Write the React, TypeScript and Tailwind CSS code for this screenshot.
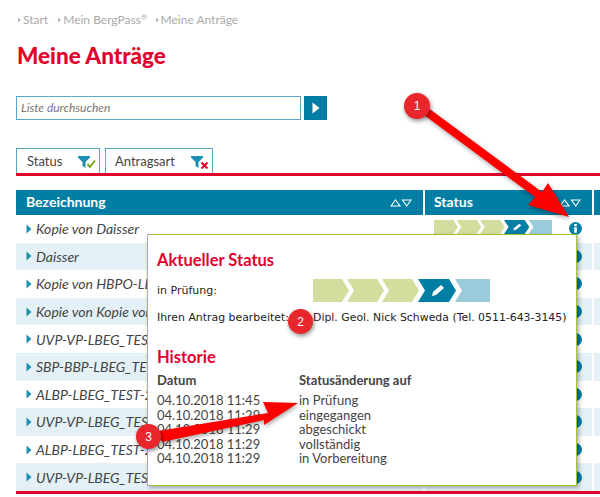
import React from "react";

const rows = [
  "Kopie von Daisser",
  "Daisser",
  "Kopie von HBPO-LBEG_TEST",
  "Kopie von Kopie von Daisser",
  "UVP-VP-LBEG_TEST-2018",
  "SBP-BBP-LBEG_TEST-2018",
  "ALBP-LBEG_TEST-2018",
  "UVP-VP-LBEG_TEST-2018",
  "ALBP-LBEG_TEST-2018",
  "UVP-VP-LBEG_TEST-2018",
];

const history = [
  ["04.10.2018 11:45", "in Prüfung"],
  ["04.10.2018 11:29", "eingegangen"],
  ["04.10.2018 11:29", "abgeschickt"],
  ["04.10.2018 11:29", "vollständig"],
  ["04.10.2018 11:29", "in Vorbereitung"],
];

const Caret = () => (
  <svg width="6" height="10" viewBox="0 0 6 10" className="shrink-0">
    <path d="M0.5 0.5 L5.5 5 L0.5 9.5 Z" fill="#1c8fb3" />
  </svg>
);

const SmallCaret = () => (
  <svg width="3" height="6" viewBox="0 0 3 6" className="shrink-0">
    <path d="M0 0.5 L3 3 L0 5.5 Z" fill="#b5b5b5" />
  </svg>
);

const SortIcons = () => (
  <svg width="22" height="8" viewBox="0 0 22 8" className="shrink-0">
    <path d="M1 7 L5.5 1 L10 7 Z M12.5 1 L21 1 L16.75 7 Z" fill="none" stroke="#ffffff" strokeWidth="1.1" />
  </svg>
);

const InfoIcon = () => (
  <svg width="13" height="13" viewBox="0 0 13 13" className="shrink-0">
    <circle cx="6.5" cy="6.5" r="6.5" fill="#007ea3" />
    <rect x="5.2" y="2" width="2.6" height="2.2" fill="#ffffff" />
    <rect x="5.2" y="5.2" width="2.6" height="5.6" fill="#ffffff" />
  </svg>
);

const Progress = ({ className }: { className: string }) => (
  <svg viewBox="0 0 177 23" preserveAspectRatio="none" className={className}>
    <path d="M0 0 H29 L36 11.5 L29 23 H0 Z" fill="#d1de9e" />
    <path d="M34 0 H64 L71 11.5 L64 23 H34 L41 11.5 Z" fill="#d1de9e" />
    <path d="M69 0 H99 L106 11.5 L99 23 H69 L76 11.5 Z" fill="#d1de9e" />
    <path d="M105 0 H136 L143 11.5 L136 23 H105 L112 11.5 Z" fill="#007ea3" />
    <path d="M142 0 H177 V23 H142 L149 11.5 Z" fill="#9bcbdb" />
    <path d="M119 17 L120 13 L128 6 L131 9 L123 16 Z" fill="#ffffff" />
  </svg>
);

const FilterIcon = ({ ok }: { ok: boolean }) => (
  <svg width="18" height="13" viewBox="0 0 18 13" className="shrink-0">
    <path d="M0 0 H12 V1.5 L7.5 6 V12 L4.5 10 V6 L0 1.5 Z" fill="#1c8fb3" />
    {ok ? (
      <path d="M9.5 8 L12 11 L17 4.5" fill="none" stroke="#76a91f" strokeWidth="2" />
    ) : (
      <path d="M10.5 6.5 L16.5 12.5 M16.5 6.5 L10.5 12.5" fill="none" stroke="#e2002d" strokeWidth="2" />
    )}
  </svg>
);

const Badge = ({ n, className }: { n: number; className: string }) => (
  <div
    className={`absolute flex items-center justify-center rounded-full bg-[#e8262c] text-white text-[12px] shadow-[1px_2px_4px_rgba(0,0,0,0.45)] font-['Liberation_Sans',sans-serif] ${className}`}
  >
    {n}
  </div>
);

export default function App() {
  return (
    <div className="relative w-[600px] h-[497px] overflow-hidden bg-white pl-4 font-['Lato',sans-serif] text-[#444]">
      {/* Breadcrumb */}
      <div className="h-[38px] pt-[1px] pl-[2px] flex items-center gap-[2px] text-[12px] leading-4 text-[#aaaaaa]">
        <SmallCaret />
        <span className="mr-[8px]">Start</span>
        <SmallCaret />
        <span className="mr-[6px]">
          Mein BergPass<sup className="text-[8px]">®</sup>
        </span>
        <SmallCaret />
        <span>Meine Anträge</span>
      </div>

      <h1 className="mt-[5px] ml-[1px] h-[53px] text-[22.5px] leading-[26px] font-black text-[#e2002d]">Meine Anträge</h1>

      {/* Search */}
      <div className="flex gap-[3px] h-6">
        <div className="w-[285px] border border-[#5aa9c4] flex items-center pl-1 italic text-[12px] text-[#777]">
          Liste durchsuchen
        </div>
        <button className="w-[23px] bg-[#007ea3] flex items-center justify-center">
          <svg width="8" height="12" viewBox="0 0 8 12">
            <path d="M0.5 0.5 L7.5 6 L0.5 11.5 Z" fill="#ffffff" />
          </svg>
        </button>
      </div>

      {/* Filter tabs */}
      <div className="mt-7 flex gap-[5px] h-[25px]">
        <div className="w-[84px] border border-b-0 border-[#5aa9c4] flex items-center justify-between pt-[2px] pl-[10px] pr-[3px] text-[13px]">
          Status
          <FilterIcon ok />
        </div>
        <div className="w-[108px] border border-b-0 border-[#5aa9c4] flex items-center justify-between pt-[2px] pl-[9px] pr-[3px] text-[13px]">
          Antragsart
          <FilterIcon ok={false} />
        </div>
      </div>
      <div className="h-[3px] bg-[#e2002d]" />

      {/* Table */}
      <div className="mt-[14px] flex h-[25px] gap-[2px] text-white text-[14px] leading-[23px] font-bold">
        <div className="w-[407px] bg-[#007ea3] flex justify-between items-center pl-[10px] pr-[11px]">
          <span className="-mt-[2px]">Bezeichnung</span>
          <SortIcons />
        </div>
        <div className="w-[167px] bg-[#007ea3] flex justify-between items-center pl-[9px] pr-[11px]">
          <span className="-mt-[2px]">Status</span>
          <SortIcons />
        </div>
        <div className="flex-1 bg-[#007ea3]" />
      </div>
      {rows.map((name, i) => (
        <div key={i} className="flex h-[27.6px] gap-[2px] text-[14px] italic">
          <div className={`w-[407px] flex items-center gap-[4px] pl-[10px] overflow-hidden whitespace-nowrap ${i % 2 ? "bg-[#e3f0f5]" : ""}`}>
            <Caret />
            {name}
          </div>
          <div className={`w-[167px] flex items-center justify-between pl-[9px] pr-[10px] ${i % 2 ? "bg-[#e3f0f5]" : ""}`}>
            {i === 0 ? <Progress className="w-[118px] h-[14px] -mt-[3px]" /> : <span />}
            <InfoIcon />
          </div>
          <div className={`flex-1 ${i % 2 ? "bg-[#e3f0f5]" : ""}`} />
        </div>
      ))}
      <div className="h-[3px] bg-[#e2002d]" />

      {/* Status popup */}
      <div className="absolute left-[147px] top-[234px] w-[430px] h-[252px] bg-white border border-[#a4c13b] shadow-[2px_2px_4px_rgba(0,0,0,0.3)] pl-[9px] pt-[15px]">
        <h2 className="text-[16.5px] leading-5 font-bold text-[#e2002d]">Aktueller Status</h2>
        <div className="mt-[9px] flex items-center h-[23px] font-['DejaVu_Sans',sans-serif] text-[11px] text-[#222]">
          <span className="w-[156px] pt-[2px]">in Prüfung:</span>
          <Progress className="w-[177px] h-[23px]" />
        </div>
        <div className="mt-[8px] flex font-['DejaVu_Sans',sans-serif] text-[10.9px] leading-4 text-[#222] whitespace-nowrap">
          <span className="w-[156px]">Ihren Antrag bearbeitet:</span>
          <span>Dipl. Geol. Nick Schweda (Tel. 0511-643-3145)</span>
        </div>
        <h2 className="mt-[21px] text-[16.5px] leading-5 font-bold text-[#e2002d]">Historie</h2>
        <div className="mt-[5px] flex text-[13px] leading-4 font-bold">
          <span className="w-[142px]">Datum</span>
          <span>Statusänderung auf</span>
        </div>
        <div className="mt-[5px] text-[13px] leading-[14.6px]">
          {history.map(([date, status], i) => (
            <div key={i} className="flex">
              <span className="w-[142px]">{date}</span>
              <span>{status}</span>
            </div>
          ))}
        </div>
      </div>

      {/* Annotations */}
      <svg width="600" height="497" className="absolute left-0 top-0 drop-shadow-[1px_2px_2px_rgba(0,0,0,0.35)]">
        <path d="M425 107 L431 110 L542 192 L548 183 L569 217 L528 205 L535 197 L424 115 Z" fill="#fd0000" />
        <path d="M158 431 L268 413 L263 402 L298 403 L264 425 L264 420 L162 442 Z" fill="#fd0000" />
      </svg>
      <Badge n={1} className="left-[404px] top-[93px] w-[26px] h-[26px]" />
      <Badge n={2} className="left-[288px] top-[309px] w-[25px] h-[25px]" />
      <Badge n={3} className="left-[136px] top-[424px] w-[25px] h-[25px]" />
    </div>
  );
}
